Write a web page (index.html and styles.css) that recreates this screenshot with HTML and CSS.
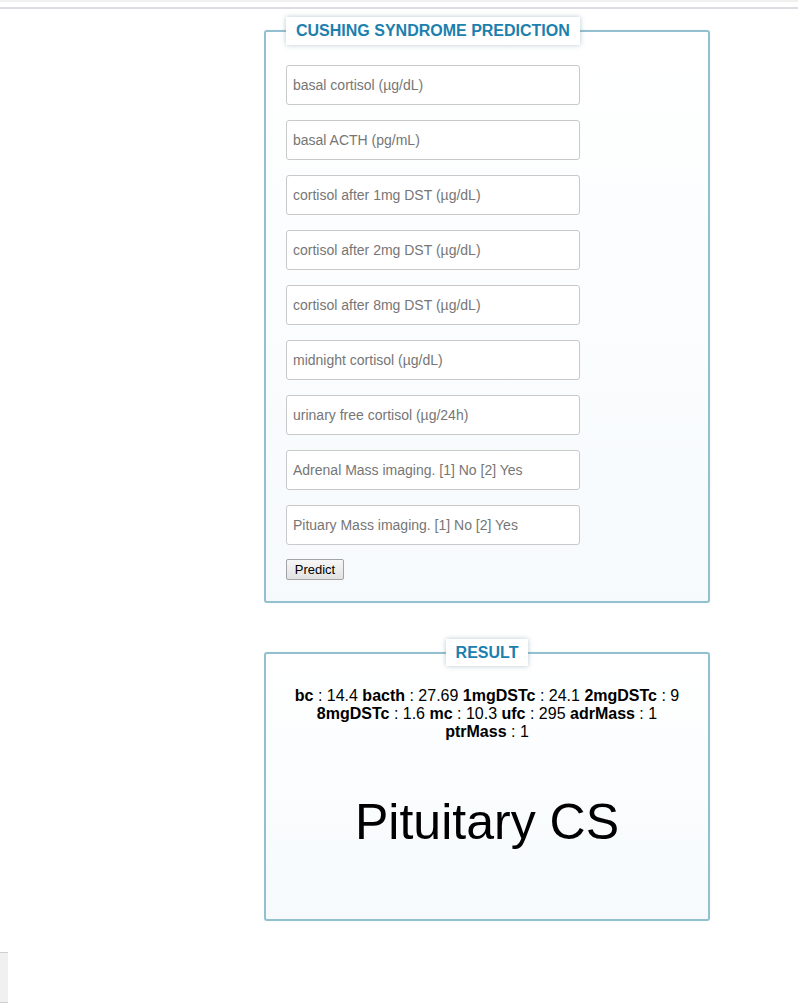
FILE: index.html
```html
<!DOCTYPE html>
<html>
<head>
<meta charset="utf-8">
<title>Cushing Syndrome Prediction</title>
<link rel="stylesheet" href="styles.css">
</head>
<body>
<div class="topbar"></div>
<div class="topline"></div>
<main class="wrap">
  <fieldset class="panel">
    <legend class="panel-title">CUSHING SYNDROME PREDICTION</legend>
    <form class="form">
      <input class="field" type="text" placeholder="basal cortisol (µg/dL)">
      <input class="field" type="text" placeholder="basal ACTH (pg/mL)">
      <input class="field" type="text" placeholder="cortisol after 1mg DST (µg/dL)">
      <input class="field" type="text" placeholder="cortisol after 2mg DST (µg/dL)">
      <input class="field" type="text" placeholder="cortisol after 8mg DST (µg/dL)">
      <input class="field" type="text" placeholder="midnight cortisol (µg/dL)">
      <input class="field" type="text" placeholder="urinary free cortisol (µg/24h)">
      <input class="field" type="text" placeholder="Adrenal Mass imaging. [1] No [2] Yes">
      <input class="field" type="text" placeholder="Pituary Mass imaging. [1] No [2] Yes">
      <div class="actions"><button class="btn" type="button">Predict</button></div>
    </form>
  </fieldset>

  <fieldset class="panel result">
    <legend class="panel-title centered">RESULT</legend>
    <p class="values"><b>bc</b> : 14.4 <b>bacth</b> : 27.69 <b>1mgDSTc</b> : 24.1 <b>2mgDSTc</b> : 9 <b>8mgDSTc</b> : 1.6 <b>mc</b> : 10.3 <b>ufc</b> : 295 <b>adrMass</b> : 1 <b>ptrMass</b> : 1</p>
    <div class="verdict">Pituitary CS</div>
  </fieldset>
</main>
<div class="stub"></div>
</body>
</html>
```

FILE: styles.css
```css
html, body {
  margin: 0;
  padding: 0;
  background: #ffffff;
  font-family: "Liberation Sans", Arial, sans-serif;
}

.topbar {
  height: 2px;
  background: #f0f0f0;
}

.topline {
  height: 2px;
  margin-top: 5px;
  background: #dcdce2;
}

.wrap {
  margin: 8px 0 0 264px;
  width: 446px;
}

.panel {
  box-sizing: border-box;
  width: 446px;
  margin: 0;
  padding: 20px 20px 21px 20px;
  border: 2px solid #93c0cf;
  border-radius: 3px;
  background: linear-gradient(to bottom, #ffffff 0%, #f6fafc 100%);
  box-shadow: 0 0 1px rgba(120, 170, 190, 0.4);
}

.panel-title {
  box-sizing: border-box;
  height: 28px;
  padding: 5px 10px;
  margin-left: 0;
  background: #ffffff;
  box-shadow: 0 0 5px rgba(80, 120, 140, 0.4);
  color: #1b80ae;
  font-size: 16px;
  line-height: 18px;
  font-weight: bold;
}

.panel-title.centered {
  height: 27px;
  padding: 5px 10px 4px;
  margin: 0 auto;
}

.form {
  display: flex;
  flex-direction: column;
  align-items: flex-start;
  gap: 15px;
}

.field {
  box-sizing: border-box;
  width: 294px;
  height: 40px;
  margin: 0;
  padding: 0 6px;
  border: 1px solid #c9c9c9;
  border-radius: 3px;
  background: #ffffff;
  font-family: "Liberation Sans", Arial, sans-serif;
  font-size: 14px;
  color: #333;
}

.field::placeholder {
  color: #767676;
}

.actions {
  display: flex;
  margin-top: -1px;
}

.btn {
  box-sizing: border-box;
  height: 21px;
  width: 58px;
  padding: 0 6px;
  border: 1px solid #a3a3a3;
  border-radius: 2px;
  background: linear-gradient(to bottom, #f7f7f7, #e2e2e2);
  color: #000;
  font-family: "Liberation Sans", Arial, sans-serif;
  font-size: 13px;
  line-height: 19px;
}

.result {
  margin-top: 36px;
  padding: 21px 20px 20px;
  min-height: 282px;
}

.values {
  margin: 0;
  text-align: center;
  font-size: 16px;
  line-height: 18px;
  color: #000;
}

.values b {
  font-weight: bold;
}

.verdict {
  margin: 53px 0 47px;
  text-align: center;
  font-size: 50px;
  line-height: 57px;
  color: #000;
}

.stub {
  box-sizing: border-box;
  margin-top: 31px;
  width: 8px;
  height: 51px;
  background: #f0f0f0;
  border-top: 1px solid #cfcfcf;
  border-bottom: 1px solid #cfcfcf;
}
```
